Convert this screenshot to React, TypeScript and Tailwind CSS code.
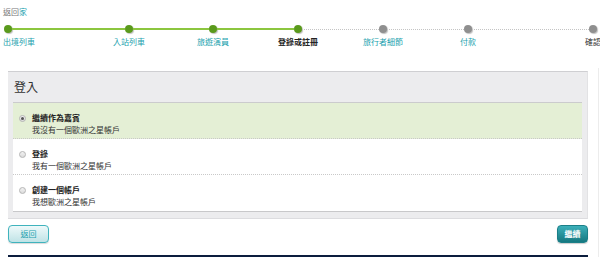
import React from "react";

const font = { fontFamily: '"Noto Sans CJK TC", "Noto Sans", sans-serif' };

const steps = [
  { label: "出境列車", done: true },
  { label: "入站列車", done: true },
  { label: "旅遊演員", done: true },
  { label: "登錄或註冊", done: true, current: true },
  { label: "旅行者細節", done: false },
  { label: "付款", done: false },
  { label: "確認", done: false },
];

// gaps between dot edges, in px
const gaps = ["w-[113px]", "w-[76px]", "w-[77px]", "w-[77px]", "w-[77px]", "w-[117px]"];

function Dot({ done }: { done: boolean }) {
  return (
    <span
      className={`block h-2 w-2 shrink-0 rounded-full shadow-[1px_1px_1px_rgba(0,0,0,0.25)] ${
        done ? "bg-[#5a9a1c]" : "bg-[#8f8f8f]"
      }`}
    />
  );
}

function Radio({ checked }: { checked?: boolean }) {
  return (
    <span className="mt-[3px] flex h-[7px] w-[7px] shrink-0 items-center justify-center rounded-full border border-[#b5b5b5] bg-gradient-to-b from-[#f2f2f2] to-[#dcdcdc]">
      {checked && <span className="h-[3px] w-[3px] rounded-full bg-[#555]" />}
    </span>
  );
}

const options = [
  { title: "繼續作為嘉賓", sub: "我沒有一個歐洲之星帳戶", checked: true },
  { title: "登錄", sub: "我有一個歐洲之星帳戶" },
  { title: "創建一個帳戶", sub: "我想歐洲之星帳戶" },
];

export default function App() {
  return (
    <div className="relative h-[257px] w-[600px] overflow-hidden bg-white" style={font}>
      <div className="px-[3px] pt-[7px] text-[8px] leading-[10px] text-[#777]">
        返回<span className="text-[#1a9fae]">家</span>
      </div>

      {/* progress */}
      <div className="mt-[8px] flex items-center pl-1">
        {steps.map((s, i) => (
          <React.Fragment key={s.label}>
            <Dot done={s.done} />
            {i < gaps.length && (
              <span
                className={`${gaps[i]} shrink-0 ${
                  steps[i + 1].done
                    ? "h-[2px] bg-[#8cc63f]"
                    : "h-0 border-t border-dotted border-[#c4c4c4]"
                }`}
              />
            )}
          </React.Fragment>
        ))}
      </div>
      <div className="relative mt-[4px] flex h-[10px] pl-1 text-[8px] leading-[10px]">
        {steps.map((s, i) => (
          <React.Fragment key={s.label}>
            <span className="relative w-2 shrink-0">
              <span
                className={`absolute top-0 whitespace-nowrap ${
                  i === 0 ? "-left-px" : "left-1/2 -translate-x-1/2"
                } ${s.current ? "font-bold text-[#222]" : i === 6 ? "text-[#333]" : "text-[#1a9fae]"}`}
              >
                {s.label}
              </span>
            </span>
            {i < gaps.length && <span className={`${gaps[i]} shrink-0`} />}
          </React.Fragment>
        ))}
      </div>

      {/* login panel */}
      <div className="mx-2 mt-[24px] w-[580px] border-t border-[#cfcfd2] border-b border-b-[#dcdcdf] border-r border-r-[#e2e2e4] bg-[#ececee] px-[5px] pb-[6px]">
        <div className="h-[30px] pl-[1px] pt-[8px] text-[12px] leading-[14px] text-[#333]">登入</div>
        <div className="border-t border-[#cbcbcd] border-b border-b-[#c8c8ca] bg-white">
          {options.map((o, i) => (
            <div
              key={o.title}
              className={`flex h-[36px] items-start gap-[6px] pl-[6px] pt-[9px] ${
                o.checked ? "bg-[#e4efd5]" : "bg-white"
              } ${i < options.length - 1 ? "border-b border-dotted border-[#c9c9c9]" : ""}`}
            >
              <Radio checked={o.checked} />
              <div className="text-[8px] leading-[12px] text-[#222]">
                <div className="font-bold">{o.title}</div>
                <div className="text-[#333]">{o.sub}</div>
              </div>
            </div>
          ))}
        </div>
      </div>

      {/* buttons */}
      <div className="mx-2 mt-[6px] flex w-[580px] items-center justify-between">
        <button className="h-[18px] w-[41px] rounded-[4px] border border-[#3fb3bd] bg-gradient-to-b from-[#eef9fa] to-[#bfe3e6] text-[8px] text-[#1a9fae] shadow-[0_1px_1px_rgba(0,0,0,0.15)]">
          返回
        </button>
        <button className="h-[18px] w-[31px] rounded-[4px] border border-[#1b7f88] bg-gradient-to-b from-[#3cb0ba] to-[#157880] text-[8px] font-bold text-white shadow-[0_1px_1px_rgba(0,0,0,0.2)]">
          繼續
        </button>
      </div>

      <div className="mx-2 mt-[12px] h-[3px] w-[580px] bg-[#0c1d3d]" />
      <div className="absolute right-[1px] top-[68px] h-[190px] w-px bg-[#ececec]" />
    </div>
  );
}
